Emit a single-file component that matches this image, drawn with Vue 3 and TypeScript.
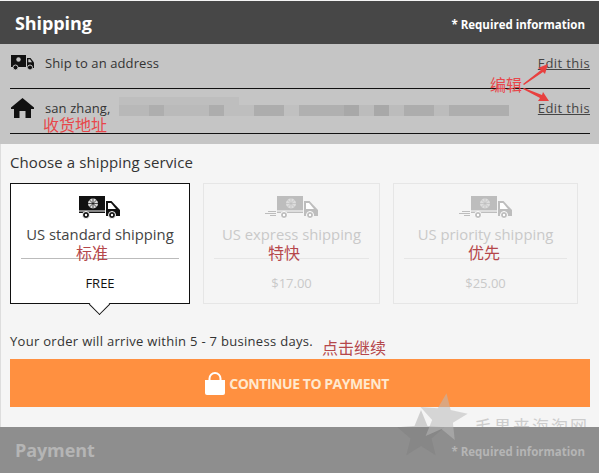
<template>
  <div class="page">
    <!-- SHIPPING HEADER -->
    <header class="bar">
      <h2>Shipping</h2>
      <span class="required">* Required information</span>
    </header>

    <!-- SUMMARY -->
    <section class="summary">
      <div class="sum-row">
        <svg class="sum-icon" width="23" height="16" viewBox="0 0 23 16">
          <path d="M0 0h15v12H0z" fill="#111" />
          <path d="M16 3h3.500L23 7.500V13h-7z" fill="#111" />
          <path d="M17.300 4.200h1.700l2 3h-3.700z" fill="#c5c5c5" />
          <circle cx="4.500" cy="12.500" r="2.500" fill="#111" stroke="#c5c5c5" />
          <circle cx="19" cy="12.500" r="2.500" fill="#111" stroke="#c5c5c5" />
          <circle cx="7.500" cy="4.500" r="2.200" fill="#c5c5c5" />
        </svg>
        <span class="sum-text">Ship to an address</span>
        <a class="edit">Edit this</a>
      </div>
      <div class="sum-row">
        <svg class="sum-icon" width="23" height="20" viewBox="0 0 23 20">
          <path d="M11.500 0 23 9.500V11h-3v9h-5.500v-7h-6v7H3v-9H0V9.500z" fill="#111" />
        </svg>
        <span class="sum-text">san zhang,</span>
        <div class="blurred">
          <i v-for="(b, i) in blurBlocks" :key="i" :style="{ width: b.w + 'px', background: b.c }"></i>
        </div>
        <a class="edit">Edit this</a>
      </div>
    </section>

    <!-- SERVICE PICKER -->
    <main class="content">
      <h3>Choose a shipping service</h3>
      <div class="cards">
        <div v-for="s in services" :key="s.name" class="card" :class="{ active: s.active }">
          <svg
            class="truck"
            :width="s.active ? 42 : 54"
            height="24"
            :viewBox="s.active ? '12 0 42 24' : '0 0 54 24'"
          >
            <path v-if="!s.active" d="M0 18.500h11M3 16.500h8M5 20.500h6" fill="none" stroke="currentColor" />
            <path d="M12 1h26v17H12z" fill="currentColor" />
            <path d="M12 16h26" stroke="#fff" />
            <path d="M39 6h5.500l8.500 9v6H39z" fill="currentColor" />
            <path d="M41 8h3l5 6h-8z" fill="#fff" />
            <circle cx="19" cy="20" r="3.500" fill="currentColor" stroke="#fff" />
            <circle cx="45" cy="20" r="3.500" fill="currentColor" stroke="#fff" />
            <circle cx="19" cy="20" r="1.200" fill="#fff" />
            <circle cx="45" cy="20" r="1.200" fill="#fff" />
            <circle cx="26" cy="8.500" r="5" fill="#ddd" />
            <path d="M26 3.500v10M21 8.500h10M22.500 5l7 7M29.500 5l-7 7" stroke="currentColor" stroke-width="0.7" />
          </svg>
          <div class="card-name">{{ s.name }}</div>
          <div class="card-price">{{ s.price }}</div>
          <span class="note-cn" :style="{ left: s.noteLeft + 'px' }">{{ s.note }}</span>
        </div>
      </div>
      <p class="eta">Your order will arrive within 5 - 7 business days.</p>
      <button class="continue" type="button">
        <svg width="20" height="24" viewBox="0 0 20 24">
          <path d="M4.500 11V7.500a5.500 5.500 0 0 1 11 0V11" fill="none" stroke="#fff" stroke-width="2" />
          <path d="M0 9h20v13a2 2 0 0 1-2 2H2a2 2 0 0 1-2-2z" fill="#fff" />
        </svg>
        <span>CONTINUE TO PAYMENT</span>
      </button>
    </main>

    <!-- PAYMENT HEADER -->
    <header class="bar muted">
      <h2>Payment</h2>
      <span class="required">* Required information</span>
    </header>

    <!-- annotations pasted on top of the screenshot -->
    <span class="anno addr">收货地址</span>
    <span class="anno edit-note">编辑</span>
    <span class="anno click-note">点击继续</span>
    <svg class="arrows" width="34" height="44" viewBox="0 0 34 44">
      <path d="M3 24 21 10l-3-2 10-4-3 10-2-2L4 25zM4 28l18 7 1-3 6 9H18l2-3L3 29z" fill="#e8403f" />
    </svg>
    <span class="watermark">毛果来海淘网</span>
    <svg class="stamp" width="100" height="70" viewBox="0 0 100 70">
      <path
        transform="translate(28 43)"
        d="M0-25 6.500-8.900 23.800-7.700 10.500 3.400 14.700 20.200 0 11-14.700 20.200-10.500 3.400-23.800-7.700-6.500-8.900z"
        fill="#777"
        fill-opacity="0.3"
      />
      <path
        transform="translate(50 26) rotate(8)"
        d="M0-25 6.500-8.900 23.800-7.700 10.500 3.400 14.700 20.200 0 11-14.700 20.200-10.500 3.400-23.800-7.700-6.500-8.900z"
        fill="#b9b9b9"
        fill-opacity="0.53"
      />
    </svg>
  </div>
</template>

<script setup lang="ts">
interface Service {
  name: string
  price: string
  note: string
  noteLeft: number
  active: boolean
}

const services: Service[] = [
  { name: 'US standard shipping', price: 'FREE', note: '标准', noteLeft: 65, active: true },
  { name: 'US express shipping', price: '$17.00', note: '特快', noteLeft: 64, active: false },
  { name: 'US priority shipping', price: '$25.00', note: '优先', noteLeft: 74, active: false },
]

// pixelated band that hides the address
const blurBlocks = [
  { w: 15, c: '#b8b8b8' },
  { w: 15, c: '#b8b8b8' },
  { w: 15, c: '#aeaeae' },
  { w: 45, c: '#bababa' },
  { w: 15, c: '#adadad' },
  { w: 30, c: '#bebebe' },
  { w: 30, c: '#adadad' },
  { w: 15, c: '#c0c0c0' },
  { w: 45, c: '#b0b0b0' },
  { w: 15, c: '#a8a8a8' },
  { w: 15, c: '#bcbcbc' },
  { w: 15, c: '#a8a8a8' },
  { w: 15, c: '#bcbcbc' },
  { w: 30, c: '#adadad' },
  { w: 15, c: '#bcbcbc' },
  { w: 60, c: '#aeaeae' },
]
</script>

<style scoped>
.page {
  position: relative;
  width: 599px;
  height: 473px;
  overflow: hidden;
  background: #f5f5f5;
  font-family: 'Open Sans', 'Noto Sans CJK SC', sans-serif;
  color: #333;
}

/* HEADERS */
.bar {
  display: flex;
  justify-content: space-between;
  align-items: center;
  height: 43px;
  margin-top: 1px;
  padding: 0 14px 0 15px;
  background: #474747;
  color: #fff;
}

.bar h2 {
  margin: 0;
  font-size: 18px;
  font-weight: 700;
  letter-spacing: -0.1px;
}

.required {
  margin-top: 3px;
  font-size: 11.5px;
  font-weight: 700;
}

.bar.muted {
  position: relative;
  z-index: 1;
  height: 46px;
  margin-top: 0;
  background: #8e8e8e;
  color: #b5b5b5;
}

/* SUMMARY */
.summary {
  height: 100px;
  padding: 0 9px 0 10px;
  background: #c5c5c5;
}

.sum-row {
  display: flex;
  align-items: center;
  box-sizing: border-box;
  height: 45px;
  padding-bottom: 6px;
  border-bottom: 1px solid #111;
  font-size: 13px;
  letter-spacing: 0.1px;
}

.sum-icon {
  flex: none;
  margin: 0 11px 0 1px;
}

.blurred {
  position: relative;
  display: flex;
  margin: 5px 0 0 9px;
}

.blurred::before {
  content: '';
  position: absolute;
  left: 0;
  top: -8px;
  width: 120px;
  height: 8px;
  background: rgba(0, 0, 0, 0.03);
}

.blurred i {
  flex: none;
  display: block;
  height: 11px;
}

.edit {
  margin-left: auto;
  color: #444;
  letter-spacing: 0.4px;
  text-decoration: underline;
}

/* CONTENT */
.content {
  height: 283px;
  padding-left: 9px;
  border-left: 1px solid #ddd;
  box-sizing: border-box;
}

.content h3 {
  margin: 0;
  padding-top: 8px;
  font-size: 15px;
  font-weight: 400;
  letter-spacing: 0.1px;
  line-height: 20px;
}

.cards {
  display: grid;
  grid-template-columns: 180px 177px 185px;
  gap: 13px;
  margin-top: 11px;
}

.card {
  position: relative;
  height: 121px;
  box-sizing: border-box;
  border: 1px solid #e6e6e6;
  color: #c9c9c9;
  text-align: center;
}

.card.active {
  border-color: #111;
  background: #fff;
  color: #444;
}

.card.active::after {
  content: '';
  position: absolute;
  left: 81px;
  bottom: -9px;
  width: 14px;
  height: 14px;
  background: #fff;
  border-right: 1px solid #111;
  border-bottom: 1px solid #111;
  transform: rotate(45deg);
}

.truck {
  display: block;
  margin: 11px auto 0;
  color: #bdbdbd;
}

.active .truck {
  color: #111;
}

.card-name {
  margin: 5px 10px 0;
  padding-bottom: 14px;
  border-bottom: 1px solid #e6e6e6;
  font-size: 14.8px;
  line-height: 20px;
  white-space: nowrap;
}

.active .card-name {
  border-bottom-color: #bbb;
}

.card-price {
  margin-top: 15px;
  font-size: 13px;
  line-height: 18px;
}

.active .card-price {
  color: #111;
}

.note-cn {
  position: absolute;
  top: 61px;
  color: #b5474b;
  font-size: 16px;
  line-height: 16px;
}

.eta {
  margin: 27px 0 0;
  font-size: 13px;
  letter-spacing: 0.3px;
  line-height: 20px;
}

.continue {
  display: flex;
  justify-content: center;
  align-items: center;
  gap: 4px;
  width: 580px;
  height: 48px;
  margin-top: 8px;
  padding: 0 6px 0 0;
  border: none;
  background: #ff9040;
  color: #ffe9cf;
  font-family: inherit;
  font-size: 14px;
  font-weight: 700;
  letter-spacing: -0.45px;
}

/* ANNOTATIONS */
.anno {
  position: absolute;
  color: #e8474b;
  font-size: 16px;
  line-height: 20px;
}

.anno.addr {
  left: 43px;
  top: 115px;
}

.anno.edit-note {
  left: 490px;
  top: 75px;
}

.anno.click-note {
  left: 322px;
  top: 338px;
  color: #b5474b;
}

.arrows {
  position: absolute;
  left: 520px;
  top: 60px;
}

.stamp {
  position: absolute;
  left: 393px;
  top: 392px;
  z-index: 2;
}

.watermark {
  position: absolute;
  left: 475px;
  top: 416px;
  color: #ccc;
  font-family: 'Noto Sans CJK SC', serif;
  font-size: 17px;
  letter-spacing: 2px;
  line-height: 20px;
}
</style>
